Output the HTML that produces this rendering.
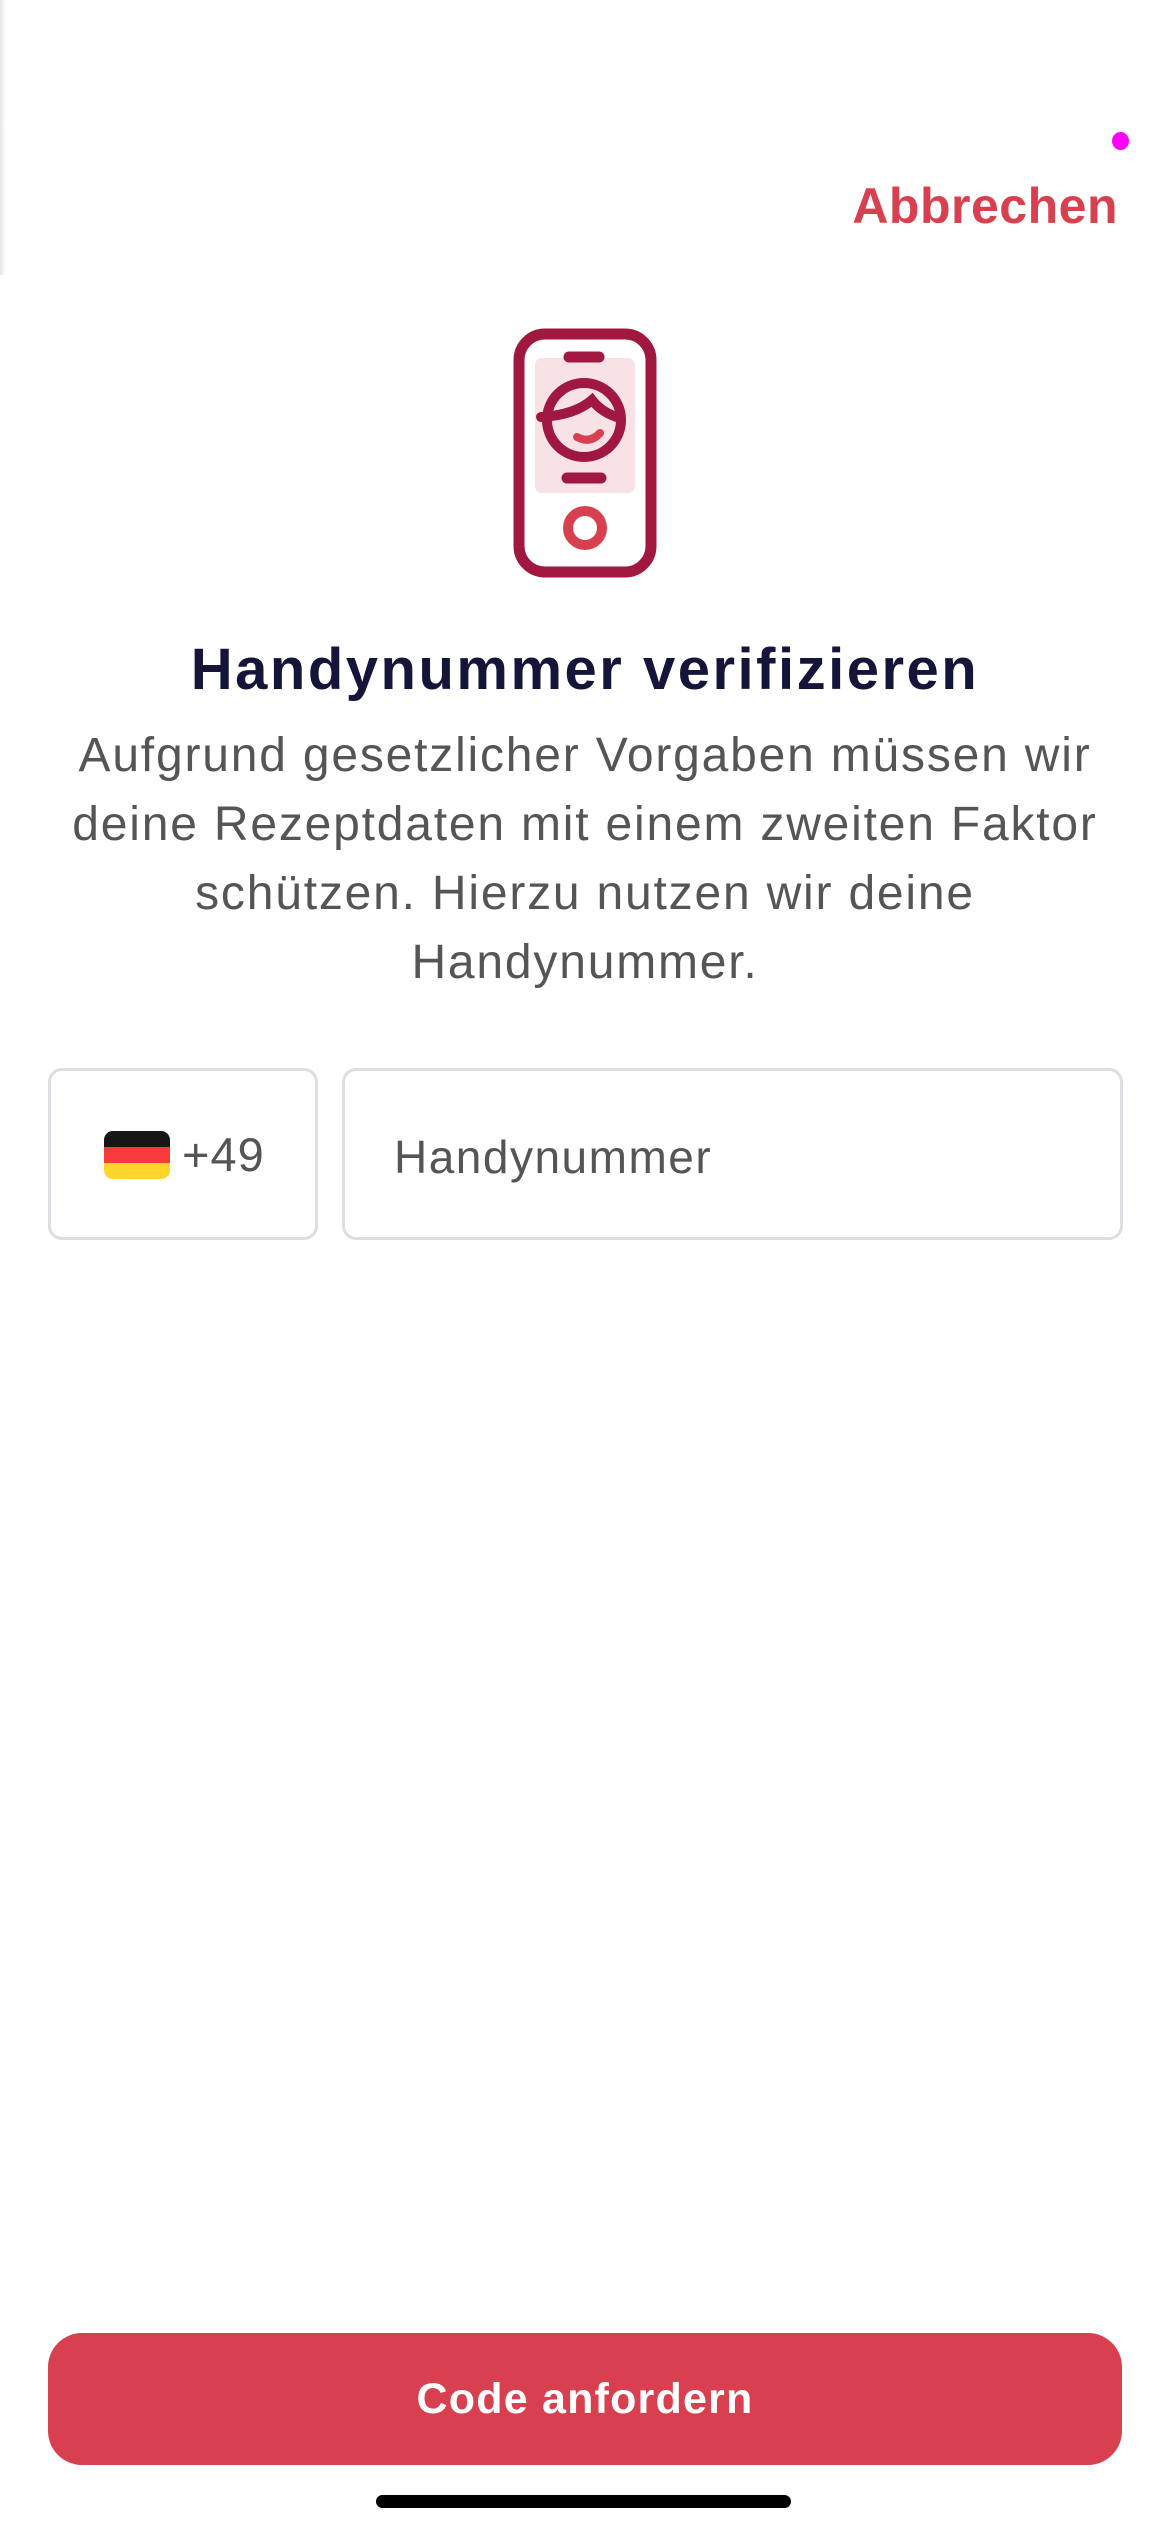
<!DOCTYPE html>
<html><head><meta charset="utf-8"><style>
body{margin:0;width:1170px;height:2532px;background:#fff;position:relative;overflow:hidden;font-family:"Liberation Sans",sans-serif;}
.a{position:absolute}
</style></head><body>
<div class="a" style="left:0;top:0;width:6px;height:275px;background:linear-gradient(90deg,#e6e6e6,#fff)"></div>
<div class="a" style="left:1112px;top:132px;width:17px;height:18px;border-radius:50%;background:#ff00ff"></div>
<div class="a" style="right:52px;top:176px;font-size:50px;font-weight:bold;color:#d9404f;line-height:60px;letter-spacing:0.5px">Abbrechen</div>
<svg class="a" style="left:500px;top:318px" width="170" height="270" viewBox="500 318 170 270">
<rect x="519" y="334" width="132" height="238" rx="26" fill="none" stroke="#a01840" stroke-width="11"/>
<rect x="535" y="358" width="100" height="135" rx="7" fill="#f8e2e5"/>
<line x1="569" y1="357" x2="599" y2="357" stroke="#a01840" stroke-width="11" stroke-linecap="round"/>
<line x1="567" y1="478" x2="601" y2="478" stroke="#a01840" stroke-width="11" stroke-linecap="round"/>
<circle cx="584" cy="420" r="37" fill="none" stroke="#a01840" stroke-width="10"/>
<path d="M541 417 Q575 415 592 400 Q602 413 620 418" fill="none" stroke="#a01840" stroke-width="10" stroke-linecap="round"/>
<path d="M577 437 Q590 444 600 433" fill="none" stroke="#d9404f" stroke-width="8" stroke-linecap="round"/>
<circle cx="585" cy="528" r="17" fill="none" stroke="#d9404f" stroke-width="10"/>
</svg>
<div class="a" style="left:0;width:1170px;top:635px;text-align:center;font-size:58px;font-weight:bold;color:#15153a;line-height:70px;letter-spacing:2.5px">Handynummer verifizieren</div>
<div class="a" style="left:0;width:1170px;top:721px;text-align:center;font-size:48px;color:#555;line-height:69px;letter-spacing:1.8px">Aufgrund gesetzlicher Vorgaben müssen wir<br>deine Rezeptdaten mit einem zweiten Faktor<br>schützen. Hierzu nutzen wir deine<br>Handynummer.</div>
<div class="a" style="left:48px;top:1068px;width:264px;height:166px;border:3px solid #dedee2;border-radius:14px"></div>
<div class="a" style="left:104px;top:1131px;width:66px;height:48px;border-radius:9px;overflow:hidden">
<div style="height:16px;background:#161616"></div><div style="height:16px;background:#f8393b"></div><div style="height:16px;background:#ffd52a"></div></div>
<div class="a" style="left:182px;top:1127px;font-size:47px;color:#555;line-height:56px;letter-spacing:1px">+49</div>
<div class="a" style="left:342px;top:1068px;width:775px;height:166px;border:3px solid #dedee2;border-radius:14px"></div>
<div class="a" style="left:394px;top:1129px;font-size:46px;color:#555;line-height:56px;letter-spacing:1.5px">Handynummer</div>
<div class="a" style="left:48px;top:2333px;width:1074px;height:132px;border-radius:34px;background:#d9404f;color:#fff;font-size:43px;font-weight:bold;text-align:center;line-height:132px;letter-spacing:1.2px">Code anfordern</div>
<div class="a" style="left:376px;top:2495px;width:415px;height:13px;border-radius:7px;background:#000"></div>
</body></html>
